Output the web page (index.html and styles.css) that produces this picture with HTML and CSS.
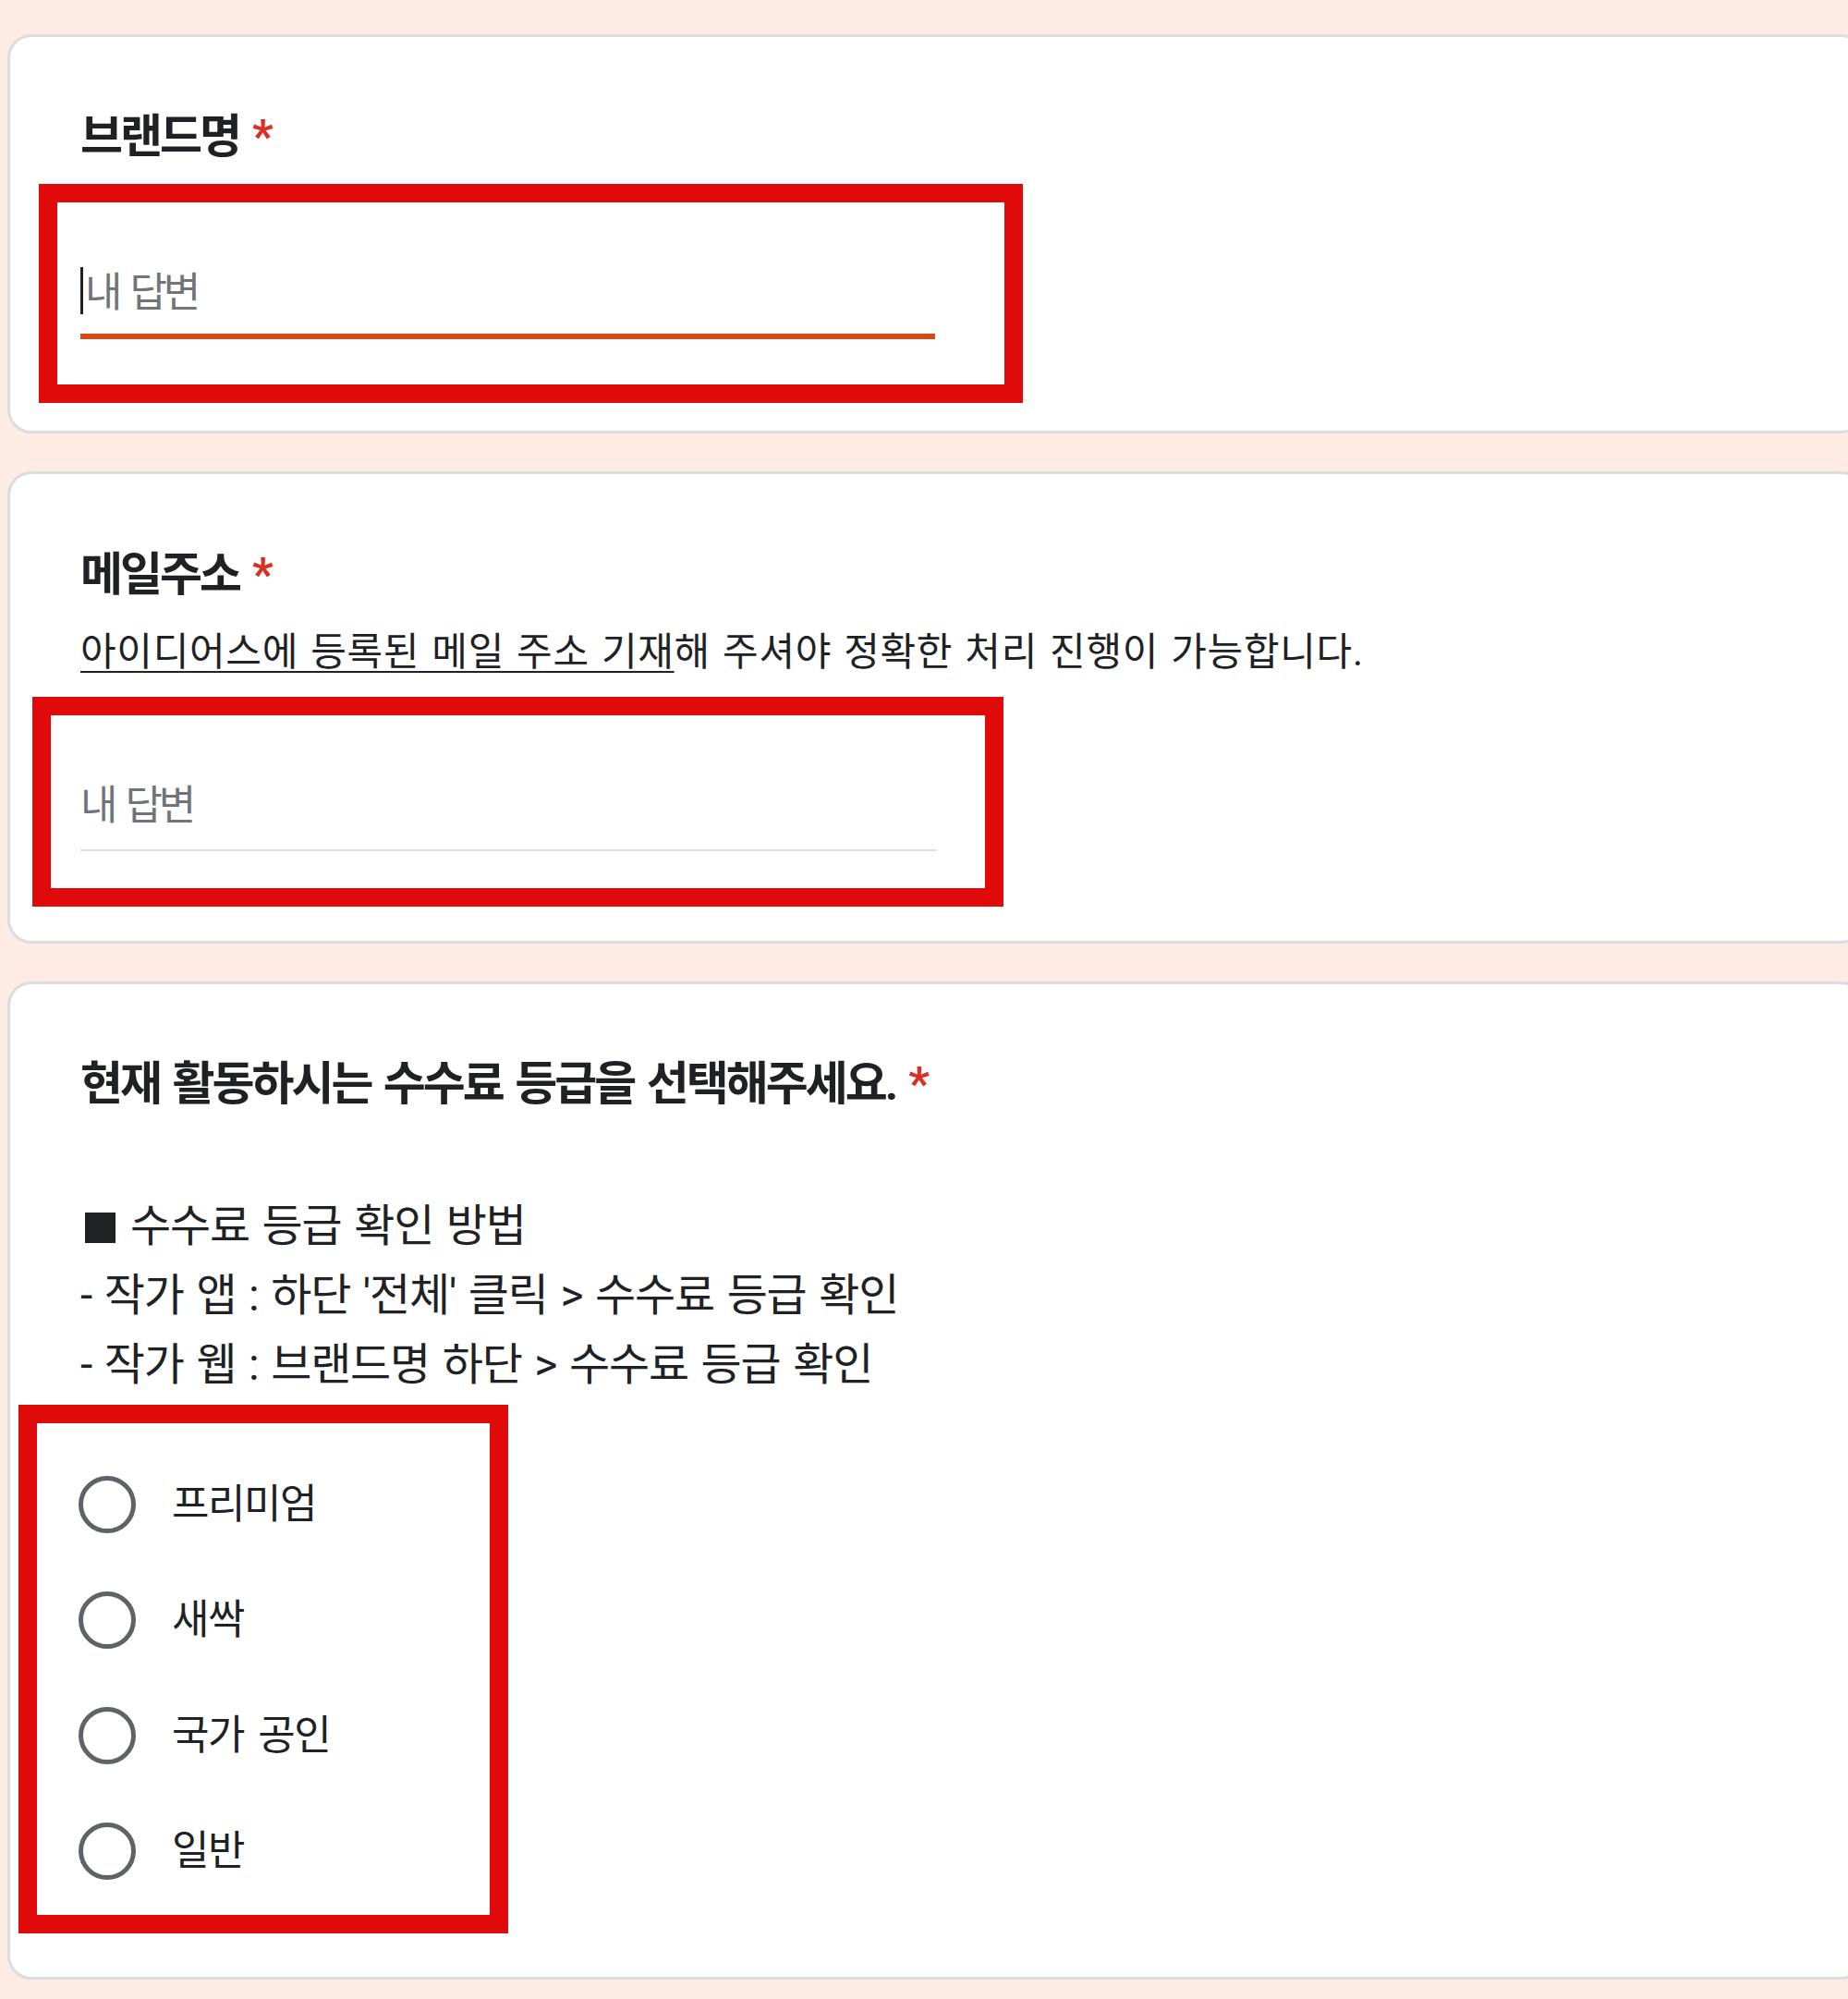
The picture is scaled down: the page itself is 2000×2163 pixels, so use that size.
FILE: index.html
```html
<!DOCTYPE html>
<html lang="ko">
<head>
<meta charset="utf-8">
<title>설문</title>
<link rel="stylesheet" href="styles.css">
</head>
<body>
<main class="page">
  <section class="card card-brand">
    <h2 class="q-title">브랜드명<span class="req">*</span></h2>
    <div class="mark mark-brand">
      <div class="answer answer-focused"><span class="caret"></span>내 답변</div>
      <div class="line line-focused"></div>
    </div>
  </section>

  <section class="card card-mail">
    <h2 class="q-title">메일주소<span class="req">*</span></h2>
    <p class="q-desc"><u>아이디어스에 등록된 메일 주소 기재</u>해 주셔야 정확한 처리 진행이 가능합니다.</p>
    <div class="mark mark-mail">
      <div class="answer">내 답변</div>
      <div class="line"></div>
    </div>
  </section>

  <section class="card card-grade">
    <h2 class="q-title">현재 활동하시는 수수료 등급을 선택해주세요.<span class="req">*</span></h2>
    <div class="q-info">
      <div class="info-line">&nbsp;</div>
      <div class="info-line"><span class="sq"></span>수수료 등급 확인 방법</div>
      <div class="info-line">- 작가 앱 : 하단 '전체' 클릭 &gt; 수수료 등급 확인</div>
      <div class="info-line">- 작가 웹 : 브랜드명 하단 &gt; 수수료 등급 확인</div>
    </div>
    <div class="mark mark-grade">
      <ul class="radios">
        <li class="radio"><span class="dot"></span><span class="label">프리미엄</span></li>
        <li class="radio"><span class="dot"></span><span class="label">새싹</span></li>
        <li class="radio"><span class="dot"></span><span class="label">국가 공인</span></li>
        <li class="radio"><span class="dot"></span><span class="label">일반</span></li>
      </ul>
    </div>
  </section>
</main>
</body>
</html>
```

FILE: styles.css
```css
* { box-sizing: border-box; }

html, body {
  margin: 0;
  padding: 0;
}

body {
  background: #feebe4;
  font-family: Roboto, "Noto Sans CJK KR", sans-serif;
  color: #202124;
  overflow: hidden;
  width: 2000px;
  height: 2163px;
}

.page {
  display: flex;
  flex-direction: column;
  gap: 41px;
  padding: 37px 0 0 8px;
}

.card {
  width: 2010px;
  background: #ffffff;
  border: 3px solid #dadce0;
  border-radius: 26px;
  padding-left: 76px;
}

.card-brand { padding-top: 78px; padding-bottom: 30px; }
.card-mail { padding-top: 79px; padding-bottom: 37px; }
.card-grade { padding-top: 78px; padding-bottom: 47px; }

.q-title {
  margin: 0;
  font-size: 50px;
  line-height: 60px;
  font-weight: 700;
  letter-spacing: -3px;
  word-spacing: 4px;
  color: #202124;
}

.req {
  color: #d93025;
  margin-left: 14px;
  letter-spacing: 0;
}

.q-desc {
  margin: 29px 0 0 0;
  font-size: 42px;
  line-height: 50px;
  letter-spacing: 0.7px;
  word-spacing: 2px;
  color: #202124;
}

.q-desc u {
  text-decoration-thickness: 2px;
  text-underline-offset: 6px;
}

.mark {
  border: 20px solid #e00a0a;
}

.mark-brand {
  margin: 21px 0 0 -45px;
  width: 1065px;
  padding: 70px 75px 49px 25px;
}

.mark-mail {
  margin: 23px 0 0 -52px;
  width: 1051px;
  padding: 72px 53px 40px 32px;
}

.mark-grade {
  margin: 6px 0 0 -67px;
  width: 530px;
  padding: 57px 0 38px 45px;
}

.answer {
  font-size: 44px;
  line-height: 52px;
  letter-spacing: -4px;
  word-spacing: 5px;
  color: #70757a;
  white-space: nowrap;
}

.caret {
  display: inline-block;
  width: 3px;
  height: 51px;
  background: #202124;
  vertical-align: -8px;
  margin-right: 2px;
  letter-spacing: 0;
}

.line {
  height: 2px;
  background: #dadce0;
  margin-top: 21px;
}

.line-focused {
  height: 6px;
  background: #d9480f;
  margin-top: 18px;
}

.q-info {
  margin-top: 11px;
  font-size: 48px;
  line-height: 75px;
  letter-spacing: -1.2px;
  word-spacing: 3px;
  color: #202124;
}

.info-line { white-space: nowrap; }

.sq {
  display: inline-block;
  width: 33px;
  height: 33px;
  background: #202124;
  margin: 0 16px 0 5px;
  vertical-align: -2px;
}

.radios {
  list-style: none;
  margin: 0;
  padding: 0;
  display: flex;
  flex-direction: column;
  gap: 63px;
}

.radio {
  display: flex;
  align-items: center;
  height: 62px;
}

.dot {
  width: 62px;
  height: 62px;
  border: 5px solid #5f6368;
  border-radius: 50%;
  flex: none;
}

.label {
  margin-left: 39px;
  font-size: 44px;
  line-height: 52px;
  letter-spacing: -1.5px;
  word-spacing: 6px;
  color: #202124;
  white-space: nowrap;
}
```
